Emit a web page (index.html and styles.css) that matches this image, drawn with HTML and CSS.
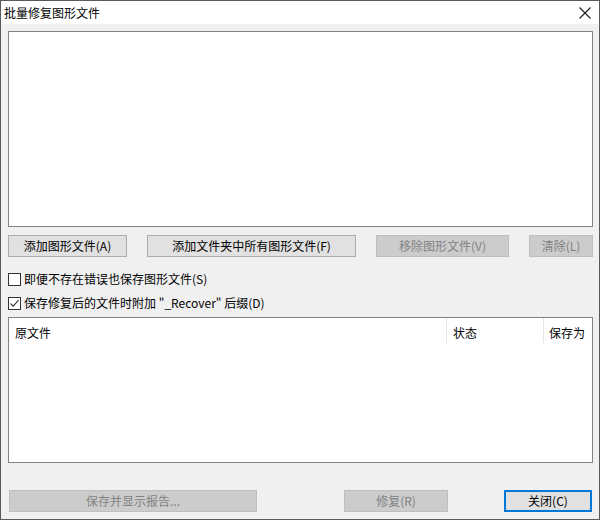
FILE: index.html
```html
<!DOCTYPE html>
<html lang="zh-CN">
<head>
<meta charset="utf-8">
<title>批量修复图形文件</title>
<link rel="stylesheet" href="styles.css">
</head>
<body>
<div class="window">
  <div class="titlebar">
    <span class="title">批量修复图形文件</span>
    <svg class="close-x" width="12" height="12" viewBox="0 0 12 12"><path d="M0.5 0.5 L11.5 11.5 M11.5 0.5 L0.5 11.5" stroke="#1a1a1a" stroke-width="1.1" fill="none"/></svg>
  </div>
  <div class="content">
    <div class="listbox"></div>
    <div class="btn-row">
      <button class="btn w-add">添加图形文件(A)</button>
      <button class="btn w-folder">添加文件夹中所有图形文件(F)</button>
      <button class="btn w-remove disabled">移除图形文件(V)</button>
      <button class="btn w-clear disabled">清除(L)</button>
    </div>
    <label class="check-row first">
      <span class="cb"></span>
      <span class="cb-text">即便不存在错误也保存图形文件(S)</span>
    </label>
    <label class="check-row second">
      <span class="cb"><svg width="11" height="11" viewBox="0 0 11 11"><path d="M1.5 5.5 L4.2 8.2 L9.6 2.2" stroke="#333" stroke-width="1.1" fill="none"/></svg></span>
      <span class="cb-text">保存修复后的文件时附加 "_Recover" 后缀(D)</span>
    </label>
    <div class="listview">
      <div class="lv-header">
        <div class="col c1">原文件</div>
        <div class="col c2">状态</div>
        <div class="col c3">保存为</div>
      </div>
    </div>
    <div class="bottom-row">
      <button class="btn w-report disabled">保存并显示报告...</button>
      <button class="btn w-repair disabled">修复(R)</button>
      <button class="btn w-close default">关闭(C)</button>
    </div>
  </div>
</div>
</body>
</html>
```
FILE: styles.css
```css
html, body {
  margin: 0;
  padding: 0;
  background: #f0f0f0;
}
body {
  font-family: "Noto Sans CJK SC", "Noto Sans", sans-serif;
  font-size: 12px;
  color: #000;
}
.window {
  width: 600px;
  height: 520px;
  box-sizing: border-box;
  border: 1px solid #5a5a5a;
  background: #f0f0f0;
  display: flex;
  flex-direction: column;
}
.titlebar {
  height: 23px;
  background: #fff;
  display: flex;
  align-items: center;
  justify-content: space-between;
  padding: 0 8px 0 3px;
  flex: none;
}
.title {
  font-size: 12px;
  line-height: 16px;
  margin-top: 1px;
  color: #000;
}
.close-x {
  display: block;
  margin-top: 1px;
}
.content {
  padding: 7px 6px 0 7px;
  display: flex;
  flex-direction: column;
}
.listbox {
  height: 196px;
  box-sizing: border-box;
  background: #fff;
  border: 1px solid #828282;
}
.btn-row, .bottom-row {
  display: flex;
  height: 22px;
}
.btn-row { margin-top: 8px; }
.bottom-row { margin-top: 27px; }
.btn {
  height: 22px;
  box-sizing: border-box;
  border: 1px solid #adadad;
  background: #e1e1e1;
  font-family: inherit;
  font-size: 12px;
  color: #000;
  padding: 0;
  margin: 0;
  line-height: 18px;
}
.btn.disabled {
  background: #cccccc;
  border-color: #bfbfbf;
  color: #838383;
}
.btn.default {
  border: 2px solid #0078d7;
}
.w-add { width: 119px; }
.w-folder { width: 209px; margin-left: 20px; }
.w-remove { width: 133px; margin-left: 20px; }
.w-clear { width: 64px; margin-left: 20px; }
.w-report { width: 248px; margin-left: 1px; }
.w-repair { width: 104px; margin-left: 87px; }
.w-close { width: 88px; margin-left: 56px; }
.check-row {
  display: flex;
  align-items: center;
  height: 14px;
}
.check-row.first { margin-top: 15px; }
.check-row.second { margin-top: 10px; }
.cb {
  width: 13px;
  height: 13px;
  box-sizing: border-box;
  border: 1px solid #333;
  background: #fff;
  display: flex;
  align-items: center;
  justify-content: center;
  flex: none;
}
.cb svg { display: block; }
.cb-text {
  margin-left: 3px;
  line-height: 14px;
  white-space: nowrap;
}
.listview {
  margin-top: 7px;
  height: 146px;
  box-sizing: border-box;
  background: #fff;
  border: 1px solid #828282;
}
.lv-header {
  display: flex;
  height: 25px;
  align-items: stretch;
}
.col {
  display: flex;
  align-items: center;
  padding-left: 6px;
  padding-top: 3px;
  white-space: nowrap;
}
.c1 { width: 431px; border-right: 1px solid #e5e5e5; }
.c2 { width: 90px; border-right: 1px solid #e5e5e5; }
.c3 { flex: 1; padding-left: 5px; }
```
